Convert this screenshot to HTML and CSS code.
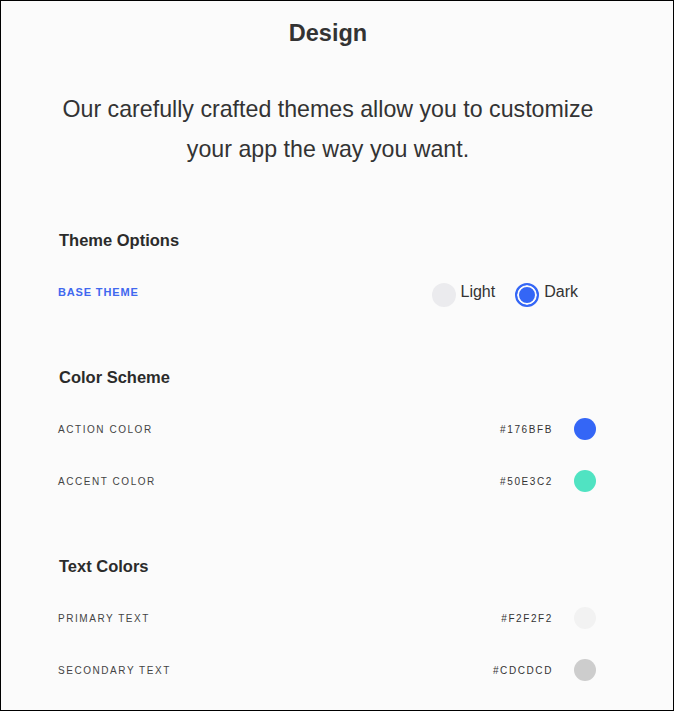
FILE: index.html
```html
<!DOCTYPE html>
<html lang="en">
<head>
<meta charset="utf-8">
<title>Design</title>
<link rel="stylesheet" href="styles.css">
</head>
<body>
<div class="frame">
  <div class="column">
    <h1 class="title">Design</h1>
    <p class="intro">Our carefully crafted themes allow you to customize your app the way you want.</p>

    <section class="section">
      <h2 class="section-title">Theme Options</h2>
      <div class="row">
        <span class="label label-accent">BASE THEME</span>
        <div class="radios">
          <label class="radio">
            <span class="radio-dot"></span>
            <span class="radio-text">Light</span>
          </label>
          <label class="radio radio-checked">
            <span class="radio-dot"></span>
            <span class="radio-text">Dark</span>
          </label>
        </div>
      </div>
    </section>

    <section class="section">
      <h2 class="section-title">Color Scheme</h2>
      <div class="row">
        <span class="label">ACTION COLOR</span>
        <div class="value">
          <span class="hex">#176BFB</span>
          <span class="swatch swatch-action"></span>
        </div>
      </div>
      <div class="row">
        <span class="label">ACCENT COLOR</span>
        <div class="value">
          <span class="hex">#50E3C2</span>
          <span class="swatch swatch-accent"></span>
        </div>
      </div>
    </section>

    <section class="section">
      <h2 class="section-title">Text Colors</h2>
      <div class="row">
        <span class="label">PRIMARY TEXT</span>
        <div class="value">
          <span class="hex">#F2F2F2</span>
          <span class="swatch swatch-primary"></span>
        </div>
      </div>
      <div class="row">
        <span class="label">SECONDARY TEXT</span>
        <div class="value">
          <span class="hex">#CDCDCD</span>
          <span class="swatch swatch-secondary"></span>
        </div>
      </div>
    </section>
  </div>
</div>
</body>
</html>
```
FILE: styles.css
```css
html, body {
  margin: 0;
  padding: 0;
}

body {
  font-family: "Liberation Sans", Arial, sans-serif;
  background: #fbfbfb;
  color: #333;
}

.frame {
  box-sizing: border-box;
  width: 674px;
  height: 711px;
  border: 1px solid #000;
  background: #fbfbfb;
  padding: 17px 0 0 57px;
  overflow: hidden;
}

.column {
  width: 540px;
}

.title {
  margin: 0;
  font-size: 23.5px;
  line-height: 30px;
  font-weight: bold;
  text-align: center;
  color: #333;
}

.intro {
  margin: 41px 0 0;
  font-size: 23.2px;
  line-height: 40px;
  text-align: center;
  color: #333;
}

.section {
  margin-top: 49px;
}

.section:first-of-type {
  margin-top: 61px;
}

.section-title {
  margin: 0 0 16px;
  padding-left: 1px;
  font-size: 16.5px;
  line-height: 20px;
  font-weight: bold;
  color: #2b2b2b;
}

.row {
  display: flex;
  align-items: center;
  justify-content: space-between;
  height: 52px;
  padding: 0 2px 0 0;
}

.label {
  font-size: 10px;
  letter-spacing: 1.55px;
  color: #444;
}

.label-accent {
  font-size: 11px;
  font-weight: bold;
  letter-spacing: 0.85px;
  color: #4068ef;
}

.radios {
  display: flex;
  align-items: flex-start;
  gap: 20px;
  margin-top: 5px;
  margin-right: 18px;
}

.radio {
  display: flex;
  align-items: flex-start;
  gap: 5px;
}

.radio-dot {
  box-sizing: border-box;
  width: 24px;
  height: 24px;
  margin-top: 1.5px;
  border-radius: 50%;
  background: #ebebee;
}

.radio-checked .radio-dot {
  background: #3466f6;
  border: 2px solid #3466f6;
  box-shadow: inset 0 0 0 2px #fbfbfb;
}

.radio-text {
  font-size: 16px;
  line-height: 20px;
  color: #333;
}

.value {
  display: flex;
  align-items: center;
  gap: 21px;
}

.hex {
  font-size: 10px;
  letter-spacing: 1.6px;
  color: #333;
}

.swatch {
  width: 22px;
  height: 22px;
  border-radius: 50%;
}

.swatch-action { background: #3466f6; }
.swatch-accent { background: #50e3c2; }
.swatch-primary { background: #f2f2f2; }
.swatch-secondary { background: #cdcdcd; }
```
